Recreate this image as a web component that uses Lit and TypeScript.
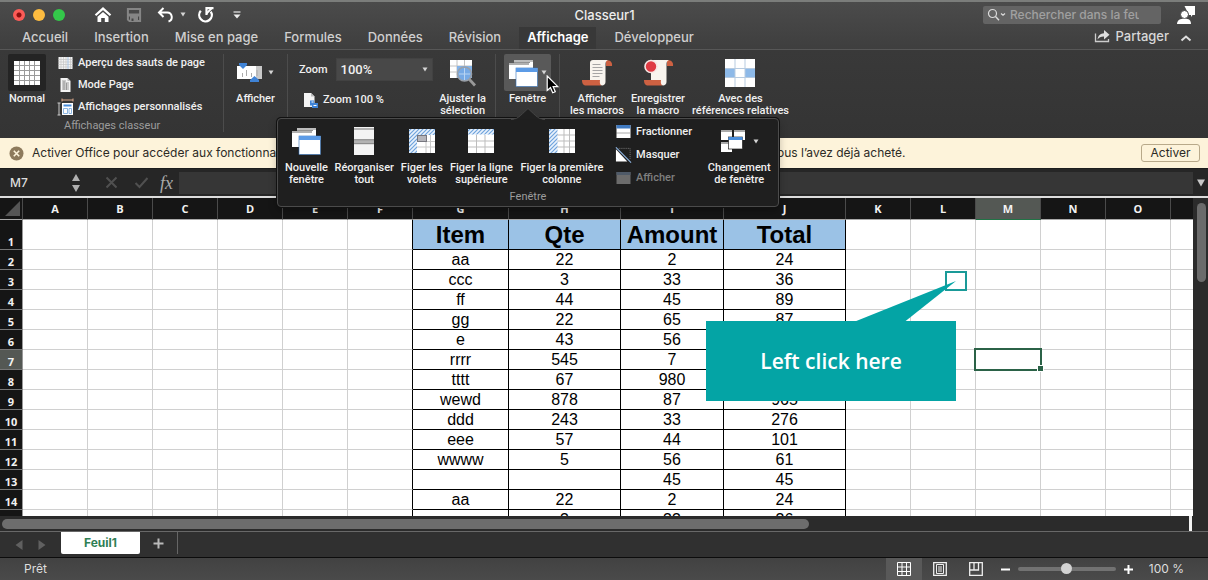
import { LitElement, html, css, svg } from "lit";
import { customElement, state } from "lit/decorators.js";
import { classMap } from "lit/directives/class-map.js";

const TABS = ["Accueil", "Insertion", "Mise en page", "Formules", "Données", "Révision", "Affichage", "Développeur"];
const COLUMNS = "ABCDEFGHIJKLMNOP".split("");
const DATA: string[][] = [
  ["Item", "Qte", "Amount", "Total"],
  ["aa", "22", "2", "24"],
  ["ccc", "3", "33", "36"],
  ["ff", "44", "45", "89"],
  ["gg", "22", "65", "87"],
  ["e", "43", "56", "99"],
  ["rrrr", "545", "7", "552"],
  ["tttt", "67", "980", "1047"],
  ["wewd", "878", "87", "965"],
  ["ddd", "243", "33", "276"],
  ["eee", "57", "44", "101"],
  ["wwww", "5", "56", "61"],
  ["", "", "45", "45"],
  ["aa", "22", "2", "24"],
  ["ccc", "3", "33", "36"],
];

const hatch = (id: string) => svg`<defs><pattern id=${id} width="4" height="4" patternUnits="userSpaceOnUse">
  <rect width="4" height="4" fill="#e9f2fc"/><path d="M-1 1L1-1M0 4L4 0M3 5L5 3" stroke="#6fa3dc" stroke-width="1.2"/></pattern></defs>`;

const icons = {
  home: html`<svg width="18" height="16" viewBox="0 0 18 16"><path d="M1.500 8.300L9 1.600l7.500 6.700" fill="none" stroke="#fff" stroke-width="2.200"/><path d="M9 5l5.500 4.800V15H10.800v-4H7.200v4H3.500V9.800z" fill="#fff"/></svg>`,
  save: html`<svg width="16" height="16" viewBox="0 0 16 16"><path d="M1.900 1.900h12.200v12.200H3.500L1.900 12.500z" fill="none" stroke="#858585" stroke-width="2"/><path d="M2 6.500h12v3H2zM4 9.500h8V15H4z" fill="#858585"/><path d="M5.500 11.500h2v2.500h-2z" fill="#454545"/></svg>`,
  undo: html`<svg width="17" height="16" viewBox="0 0 17 16"><path d="M6.500 1L2 5.500 6.500 10M2.500 5.500H10a4.600 4.600 0 0 1 1.500 9" fill="none" stroke="#fff" stroke-width="2"/></svg>`,
  redo: html`<svg width="18" height="17" viewBox="0 0 18 17"><path d="M3.800 4.800A6.300 6.300 0 1 0 13.800 5.600" fill="none" stroke="#fff" stroke-width="2.300"/><path d="M9.500 9V2.200H16.500" fill="none" stroke="#fff" stroke-width="2.200"/><path d="M9.500 7.500L14.500 2.500" stroke="#fff" stroke-width="1.800"/></svg>`,
  more: html`<svg width="8" height="10" viewBox="0 0 8 10"><path d="M0.500 2h7" stroke="#ddd" stroke-width="1.300"/><path d="M0.500 4.500h7L4 8.500z" fill="#eee"/></svg>`,
  caret: html`<svg width="6" height="5" viewBox="0 0 6 5"><path d="M0.500 0.500h5L3 4.500z" fill="#d4d4d4"/></svg>`,
  search: html`<svg width="20" height="14" viewBox="0 0 20 14"><circle cx="5.500" cy="5.500" r="4" fill="none" stroke="#dcdcdc" stroke-width="1.200"/><path d="M8.500 8.500l3.500 3.700" stroke="#dcdcdc" stroke-width="1.400"/><path d="M14 5.500l2 1.700 2-1.700" fill="none" stroke="#dcdcdc" stroke-width="1.200"/></svg>`,
  person: html`<svg width="20" height="20" viewBox="0 0 20 20"><path d="M8.500 1H19v9h-2.500l-1.500 2v-2h-2z" fill="#fff"/><circle cx="8.500" cy="9.500" r="4" fill="#fff" stroke="#454545"/><path d="M1 19c.3-4 3-5.200 7.500-5.200S14.800 15 15 19z" fill="#fff"/></svg>`,
  share: html`<svg width="17" height="14" viewBox="0 0 17 14"><path d="M1.500 4.500v8h13v-2.500" fill="none" stroke="#ccc" stroke-width="1.300"/><path d="M3.500 10.500C4 6.500 6.500 4.300 10 4.200V1l5.500 4.800-5.500 4.700V7.400C7 7.300 5 8.500 3.500 10.500z" fill="#ddd"/></svg>`,
  collapse: html`<svg width="12" height="7" viewBox="0 0 12 7"><path d="M1.500 5.500L6 1.500l4.500 4" fill="none" stroke="#ddd" stroke-width="2"/></svg>`,
  normal: html`<svg width="28" height="26" viewBox="0 0 28 26"><rect x="1" y="1" width="26" height="24" fill="#fff"/><path d="M6.500 1v24M11.500 1v24M16.500 1v24M21.500 1v24M1 5.500h26M1 10.500h26M1 15.500h26M1 20.500h26" stroke="#9a9a9a" stroke-width="1"/></svg>`,
  breaks: html`<svg width="16" height="14" viewBox="0 0 16 14"><rect x="1" y="1" width="14" height="12" fill="#f3f3f3"/><path d="M3.500 1v12M6 1v12M8.500 1v12M13 1v12M1 3.500h14M1 6h14M1 8.500h14M1 11h14" stroke="#c4c4c4" stroke-width=".7"/><path d="M10.500 1v12" fill="none" stroke="#a8c4e4"/></svg>`,
  page: html`<svg width="16" height="16" viewBox="0 0 16 16"><path d="M3 1h7l3 3v11H3z" fill="#f4f4f4"/><path d="M4.500 4h4M4.500 6h7M4.500 8h7M4.500 10h7M4.500 12h7M6.500 4v9M9 6v7" stroke="#8d8d8d" stroke-width=".8"/><path d="M10 1v3h3" fill="#bbb"/></svg>`,
  custom: html`<svg width="17" height="18" viewBox="0 0 17 18"><path d="M5 2h11M5 .5v3M16 .5v3" stroke="#d9a88a"/><path d="M2 5v12M.5 5h3M.5 17h3" stroke="#ccc"/><rect x="5" y="5" width="11" height="12" fill="#fff"/><rect x="6.500" y="6.500" width="8" height="2" fill="#4a8edb"/><path d="M6.500 10.500h4v5h-4zM12 10.500h2.500v5H12z" fill="none" stroke="#6fa3dc" stroke-width=".8"/></svg>`,
  show: html`<svg width="26" height="22" viewBox="0 0 26 22"><rect x="0" y="4" width="25" height="13" fill="#fff"/><rect x="19" y="4" width="6" height="13" fill="#c9c9c9"/><path d="M5.500 11v4M9.500 8v6M14.500 11v4M20 8v6" stroke="#aaa"/><path d="M2 1h8v2L6 7 2 3z" fill="#3f83d6"/><path d="M13 20h9v-2l-4.500-4L13 18z" fill="#3f83d6"/></svg>`,
  zoom100: html`<svg width="17" height="17" viewBox="0 0 17 17"><path d="M2 1h7l3.500 3.500V15H2z" fill="#f4f4f4"/><path d="M9 1v3.500h3.500" fill="#bbb"/><path d="M8 8.500h4v2.500h4v5h-6v-2.500H8z" fill="#3f83d6"/><path d="M9.500 10h2M11.500 13.500h3" stroke="#fff"/></svg>`,
  fit: html`<svg width="27" height="28" viewBox="0 0 27 28"><rect x="1" y="1" width="22" height="18" fill="#fff"/><path d="M8 1v18M15.500 1v18M1 7h22M1 13h22" stroke="#c2c2c2"/><rect x="8" y="7" width="15" height="12" fill="#82b2e8"/><path d="M20 20l6 6.500" stroke="#999" stroke-width="2.800"/><circle cx="15.500" cy="15" r="7" fill="#77aae5" stroke="#9aa0a8" stroke-width="1.600"/><path d="M15.500 9v12M10 15h11" stroke="#b9d4f2"/></svg>`,
  window: html`<svg width="30" height="28" viewBox="0 0 30 28"><rect x="6" y="1" width="19" height="15" fill="#fff"/><rect x="6" y="1" width="19" height="2" fill="#bdbdbd"/><path d="M6 3.500h16" stroke="#777" stroke-width=".8"/><rect x="1" y="4" width="20" height="16" fill="#fff"/><path d="M1 5h20" stroke="#b0b0b0" stroke-width="2"/><rect x="8" y="9" width="21.500" height="18.500" fill="#fff" stroke="#2f6fb8" stroke-width=".6"/><rect x="8" y="9" width="21.500" height="4" fill="#5c9be6"/></svg>`,
  macros: html`<svg width="32" height="28" viewBox="0 0 32 28"><path d="M25 1c5 0 6.500 3 6 6h-6z" fill="#cd6142"/><path d="M9 4c0-2 1-3 3-3h15c-2 1-2.500 2-2.500 4v18c0 3-3 4-5 3L9 21z" fill="#f8f4ee"/><path d="M1 21h18c-.5 3 0 4.500 1.500 5.500H5C2 26.500 1 24 1 21z" fill="#cd6142"/><path d="M11.500 5.500h8M11.500 8.500h10M11.500 11.500h10M11.500 14.500h10M11.500 17.500h7" stroke="#9c9c9c" stroke-width=".9"/></svg>`,
  record: html`<svg width="32" height="28" viewBox="0 0 32 28"><path d="M25 1c5 0 6.500 3 6 6h-6z" fill="#cd6142"/><path d="M9 4c0-2 1-3 3-3h15c-2 1-2.500 2-2.500 4v18c0 3-3 4-5 3L9 21z" fill="#f8f4ee"/><path d="M2 21h17c-.5 3 0 4.500 1.500 5.500H6C3 26.500 2 24 2 21z" fill="#cd6142"/><circle cx="9" cy="7.500" r="6" fill="#df3b43" stroke="#f7e6e3" stroke-width="1.600"/></svg>`,
  relative: html`<svg width="32" height="28" viewBox="0 0 32 28"><rect x="1" y="0" width="30" height="28" fill="#fff"/><rect x="1" y="9" width="10" height="10" fill="#8db9e8"/><rect x="21" y="9" width="10" height="10" fill="#8db9e8"/><path d="M11 0v28M21 0v28M1 9.500h30M1 18.500h30" stroke="#b7cbe0"/></svg>`,
  arrange: html`<svg width="22" height="28" viewBox="0 0 22 28"><rect x="1" y="0" width="20" height="28" fill="#f4f4f4"/><rect x="1" y="1" width="20" height="2" fill="#b3b3b3"/><rect x="1" y="13" width="20" height="3.500" fill="#b3b3b3"/><path d="M1 12.700h20M1 16.700h20" stroke="#666" stroke-width=".8"/></svg>`,
  freeze: html`<svg width="28" height="26" viewBox="0 0 28 26">${hatch("hf")}<rect x="1" y="1" width="26" height="24" fill="#fff"/><path d="M18 7v18M1 13.500h26M1 19h26M22.500 7v18" stroke="#c8c8c8"/><rect x="1" y="1" width="26" height="6" fill="url(#hf)"/><rect x="1" y="1" width="8" height="24" fill="url(#hf)"/><rect x="9.500" y="7.500" width="9" height="6" fill="#b5b5bb" stroke="#77777f"/></svg>`,
  freezeRow: html`<svg width="28" height="26" viewBox="0 0 28 26">${hatch("hr")}<rect x="1" y="1" width="26" height="24" fill="#fff"/><path d="M9.500 7v18M18 7v18M1 13h26M1 19h26" stroke="#bdbdbd"/><rect x="1" y="1" width="26" height="5.500" fill="url(#hr)"/></svg>`,
  freezeCol: html`<svg width="28" height="26" viewBox="0 0 28 26">${hatch("hc")}<rect x="1" y="1" width="26" height="24" fill="#fff"/><path d="M16 1v24M21.500 1v24M9 7h18M9 13h18M9 19h18" stroke="#bdbdbd"/><rect x="1" y="1" width="8.500" height="24" fill="url(#hc)"/></svg>`,
  split: html`<svg width="16" height="15" viewBox="0 0 16 15"><rect x="1" y="1" width="14" height="13" fill="#fff"/><rect x="1" y="1" width="14" height="3.500" fill="#3f79c0"/><path d="M1 9h14" stroke="#555" stroke-dasharray="1 1"/></svg>`,
  hide: html`<svg width="18" height="18" viewBox="0 0 18 18"><path d="M4 2h12v12" fill="none" stroke="#777" stroke-dasharray="1 1"/><path d="M1 3v13h12z" fill="#fff"/><path d="M1 1l16 16" stroke="#8fb6e4" stroke-width="1.200"/></svg>`,
  unhide: html`<svg width="16" height="14" viewBox="0 0 16 14"><rect x="1" y="1" width="14" height="12" fill="#6c6c6c"/><rect x="1" y="1" width="14" height="3" fill="#4f5a68"/></svg>`,
  swap: html`<svg width="28" height="24" viewBox="0 0 28 24"><rect x="1" y="1" width="11" height="10" fill="#fff"/><rect x="1" y="1" width="11" height="2" fill="#aaa"/><rect x="14" y="1" width="11" height="10" fill="#fff"/><rect x="14" y="1" width="11" height="2" fill="#aaa"/><rect x="1" y="13" width="11" height="10" fill="#fff"/><rect x="1" y="13" width="11" height="2" fill="#aaa"/><rect x="8.500" y="8" width="14" height="12" fill="#fff" stroke="#222" stroke-width=".7"/><rect x="8.500" y="8" width="14" height="3" fill="#4a8edb"/></svg>`,
  pointer: html`<svg width="14" height="20" viewBox="0 0 14 20"><path d="M1.200 1v14.500l3.300-3 2.200 5.300 2.600-1.100-2.200-5.100h4.700z" fill="#000" stroke="#fff" stroke-width="1.200"/></svg>`,
};

@customElement("app-root")
export class AppRoot extends LitElement {
  @state() private activeTab = "Affichage";

  static styles = css`
    :host {
      display: flex;
      flex-direction: column;
      height: 100vh;
      overflow: hidden;
      background: #2b2b2b;
      color: #f0f0f0;
      font: 500 11px/12px Inter, "Liberation Sans", sans-serif;
    }
    * { box-sizing: border-box; }
    button, input, select { font: inherit; color: inherit; background: none; border: 0; padding: 0; margin: 0; outline: 0; }
    button { cursor: pointer; }
    svg { display: block; flex: none; }

    .top { background: linear-gradient(#4b4b4b, #3e3e3e); border-top: 2px solid #7b7d7b; }
    .titlebar { display: grid; grid-template-columns: 1fr auto 1fr; align-items: center; height: 25px; padding: 0 12px 0 13px; }
    .quick { display: flex; align-items: center; }
    .dots { display: flex; gap: 8px; margin-right: 29px; }
    .dot { width: 12px; height: 12px; border-radius: 50%; }
    .red { background: radial-gradient(circle, #8c0d0d 0 2px, #fc5b57 3px); }
    .yellow { background: #fdbc40; }
    .green { background: #34c84a; }
    .save { margin: 0 15px 0 14px; }
    .undo { margin-right: 6px; }
    .redo { margin: 0 18px 0 11px; }
    .title { font-size: 13px; line-height: 16px; font-weight: 500; color: #ededed; margin: 0; }
    .title-right { display: flex; justify-content: flex-end; align-items: center; gap: 15px; }
    .search { display: flex; align-items: center; gap: 3px; height: 18px; width: 178px; padding: 0 22px 0 4px; background: #646464; border-radius: 2px; }
    .search input { flex: 1; min-width: 0; font-size: 12px; line-height: 16px; }
    .search input::placeholder { color: #a0a0a0; opacity: 1; }

    .tabs { display: flex; align-items: center; height: 23px; padding: 0 16px 0 14px; border-bottom: 1px solid #575757; }
    .tab { height: 22px; padding: 0 8px 3px; margin-right: 10px; font-size: 13px; line-height: 16px; color: #cfcfcf; }
    .tab.active { background: #383838; color: #fff; font-weight: 600; }
    .share { display: flex; align-items: center; gap: 4px; margin-left: auto; padding-bottom: 4px; font-size: 13px; line-height: 18px; color: #d8d8d8; }
    .collapse { margin-left: 11px; }

    .ribbon { display: flex; height: 88px; flex: none; background: linear-gradient(#393939, #343434); padding-top: 4px; font-family: Roboto, "Liberation Sans", sans-serif; }
    .group { position: relative; display: flex; border-right: 1px solid #4c4c4c; margin-bottom: 6px; }
    .group:last-child { border: 0; }
    .big { display: flex; flex-direction: column; align-items: center; gap: 2px; text-align: center; white-space: nowrap; }
    .art { display: flex; align-items: center; justify-content: center; gap: 5px; height: 37px; padding: 0 4px; border-radius: 2px; }
    .art.dark { background: #242424; width: 38px; }
    .art.lit { background: #595959; gap: 3px; }
    .g-views { width: 224px; padding-left: 8px; gap: 11px; }
    .views { display: flex; flex-direction: column; gap: 3px; }
    .line { display: flex; align-items: center; gap: 4px; height: 20px; white-space: nowrap; }
    .line svg { width: 17px; }
    .views .line:first-child { height: 18px; }
    .caption { color: #9c9c9c; font-weight: 400; }
    .views .caption { padding-left: 7px; }
    .g-show { width: 64px; justify-content: center; }
    .g-zoom { width: 208px; padding: 0 9px 0 11px; justify-content: space-between; }
    .zoomcol { display: flex; flex-direction: column; gap: 9px; }
    .zoomrow { display: flex; align-items: center; gap: 8px; padding-top: 4px; }
    .combo { display: flex; align-items: center; width: 97px; height: 23px; padding-right: 4px; background: #484848; border: 1px solid #424242; }
    .combo select { flex: 1; appearance: none; padding-left: 4px; font-size: 13px; line-height: 16px; }
    .zoomcol .line { padding-left: 3px; }
    .g-window { width: 64px; justify-content: center; }
    .g-macros { padding-left: 10px; gap: 7px; }

    .pointer { position: absolute; left: 50px; top: 21px; z-index: 4; }
    .flyout { position: absolute; left: -219px; top: 64px; width: 502px; height: 89px; z-index: 3; padding: 5px 7px 0; background: #1f1f1f; border: 1px solid #4b4b4b; border-radius: 4px; box-shadow: 0 0 0 1px #111, 0 4px 8px #0004; }
    .tail { position: absolute; left: 233px; top: -11px; }
    .choices { display: flex; gap: 6px; height: 67px; }
    .choices .art { height: 34px; }
    .choices .big { gap: 4px; }
    .w1 { width: 43px; } .w2 { width: 61px; } .w3 { width: 43px; } .w4 { width: 65px; } .w5 { width: 85px; } .w6 { width: 64px; }
    .choices .big.w6 { margin-left: 3px; }
    .stack { width: 84px; margin-left: 5px; margin-top: -4px; }
    .stack .line { height: 23px; }
    .off { color: #7f7f7f; }
    .flyout .caption { text-align: center; }

    .banner { display: flex; align-items: center; gap: 8px; height: 31px; flex: none; padding: 0 8px 0 9px; background: #fdf3da; color: #2c2a25; border-bottom: 1px solid #1d1d1d; font-size: 12px; line-height: 16px; font-weight: 400; }
    .banner p { display: flex; flex: 1; margin: 0; white-space: nowrap; }
    .banner .lead { width: 745px; overflow: hidden; }
    .activate { width: 59px; height: 18px; border: 1px solid #b8a98a; border-radius: 3px; }

    .formula { display: flex; align-items: center; height: 27px; flex: none; background: #262626; padding-left: 10px; }
    .cellname { width: 60px; font-size: 12px; line-height: 16px; color: #dcdcdc; }
    .fx { font: italic 18px/20px "Liberation Serif", serif; color: #aaa; margin: 0 6px 0 11px; }
    .step { margin-right: 23px; }
    .cancel { margin-right: 16px; }
    .fbox { flex: 1; height: 22px; background: #363636; }
    .drop { margin: 0 3px 0 4px; }

    .sheet { position: relative; display: flex; flex: 1; min-height: 0; border-top: 2px solid #dcdcdc; }
    .cells { position: relative; flex: 1; min-width: 0; overflow: hidden; background: #fff; }
    table { table-layout: fixed; width: 1233px; border-collapse: separate; border-spacing: 0; color: #000; font: 400 16px/18px "Liberation Sans", Arial, sans-serif; }
    col.c { width: 65px; } col.rowhead { width: 23px; } col.G { width: 96px; } col.H { width: 112px; } col.I { width: 103px; } col.J { width: 122px; }
    th, td { padding: 0; height: 20px; border-right: 1px solid #d0d0d0; border-bottom: 1px solid #d0d0d0; text-align: center; overflow: hidden; white-space: nowrap; }
    td { padding-top: 1px; }
    thead th { height: 22px; background: #151515; color: #f2f2f2; border-right-color: #4a4a4a; border-bottom-color: #aaa; font: 700 11px/18px "Open Sans", sans-serif; }
    tbody th { background: #151515; color: #f2f2f2; border-bottom-color: #777; border-right-color: #999; font: 700 11px/14px "Open Sans", sans-serif; vertical-align: bottom; }
    thead th.sel { background: #545854; border-bottom: 1px solid #217346; }
    tbody th.sel { background: #545854; }
    .corner svg { margin-left: 4px; }
    tr.first > * { height: 30px; }
    td.k { border-color: #000; }
    td.edge { border-right-color: #000; }
    tr.first td.k { background: #9bc2e6; font-size: 24px; line-height: 28px; font-weight: 700; }
    .vbar { width: 15px; flex: none; background: #2b2b2b; padding: 5px 2px 0 4px; }
    .vthumb { width: 9px; height: 79px; border-radius: 5px; background: #6b6b6b; }
    .selection { position: absolute; left: 974px; top: 150px; width: 68px; height: 23px; border: 2px solid #2b6247; z-index: 1; }
    .handle { position: absolute; right: -4px; bottom: -3px; width: 5px; height: 5px; background: #2b6247; border: 1px solid #fff; box-sizing: content-box; }
    .target { position: absolute; left: 945px; top: 73px; width: 22px; height: 20px; border: 2px solid #1a9a98; }
    .beak { position: absolute; left: 855px; top: 83px; }
    .callout { position: absolute; left: 706px; top: 123px; width: 250px; height: 80px; display: grid; place-items: center; background: #04a4a5; color: #fff; font: 600 21px/28px "Open Sans", sans-serif; z-index: 2; }

    .hbar { display: flex; height: 15px; flex: none; margin-right: 19px; padding: 3px 0 0 2px; background: #2b2b2b; box-shadow: 3px 0 #f2f2f2; }
    .hthumb { width: 68%; height: 10px; border-radius: 5px; background: #6d6d6d; }
    .sheets { display: flex; align-items: flex-start; height: 27px; flex: none; background: #303030; border-top: 1px solid #686868; border-bottom: 1px solid #0c0c0c; }
    .nav { display: flex; gap: 15px; padding: 8px 15px 0 15px; }
    .sheet-tab { width: 79px; height: 22px; background: #fff; color: #2f8055; font-size: 12px; line-height: 22px; font-weight: 700; border-radius: 0 0 2px 2px; }
    .add { display: grid; place-items: center; width: 38px; height: 22px; border-right: 1px solid #666; }
    .status { display: flex; align-items: center; height: 22px; flex: none; padding: 0 24px; background: linear-gradient(#424242, #4a4a4a); color: #dedede; font-size: 12px; font-weight: 400; line-height: 16px; }
    .ready { margin-right: auto; }
    .mode { display: grid; place-items: center; width: 36px; height: 22px; }
    .mode.on { background: #595959; }
    .zoomer { display: flex; align-items: center; gap: 8px; margin: 0 16px 0 7px; }
    input[type="range"] { appearance: none; width: 98px; height: 14px; }
    input[type="range"]::-webkit-slider-runnable-track { height: 4px; background: #727272; border-radius: 2px; }
    input[type="range"]::-webkit-slider-thumb { appearance: none; width: 11px; height: 11px; margin-top: -4px; border-radius: 50%; background: #d2d2d2; }
  `;

  private big(icon: unknown, a: string, b = "", cls = "", caret = false) {
    return html`<button class="big ${cls}">
      <span class="art">${icon}${caret ? icons.caret : ""}</span>
      <span>${a}${b ? html`<br />${b}` : ""}</span>
    </button>`;
  }

  private line(icon: unknown, label: string, disabled = false) {
    return html`<button class="line ${disabled ? "off" : ""}" ?disabled=${disabled}>${icon}<span>${label}</span></button>`;
  }

  private flyout() {
    return html`<div class="flyout">
      <svg class="tail" width="34" height="12" viewBox="0 0 34 12"><path d="M0 11.500C6 11.500 8 9 17 .5 26 9 28 11.500 34 11.500" fill="#1f1f1f" stroke="#444"/><path d="M3 12h28" stroke="#1f1f1f"/></svg>
      <div class="choices">
        ${this.big(icons.window, "Nouvelle", "fenêtre", "w1")}
        ${this.big(icons.arrange, "Réorganiser", "tout", "w2")}
        ${this.big(icons.freeze, "Figer les", "volets", "w3")}
        ${this.big(icons.freezeRow, "Figer la ligne", "supérieure", "w4")}
        ${this.big(icons.freezeCol, "Figer la première", "colonne", "w5")}
        <div class="stack">
          ${this.line(icons.split, "Fractionner")}
          ${this.line(icons.hide, "Masquer")}
          ${this.line(icons.unhide, "Afficher", true)}
        </div>
        ${this.big(icons.swap, "Changement", "de fenêtre", "w6", true)}
      </div>
      <div class="caption">Fenêtre</div>
    </div>`;
  }

  private row(values: string[], r: number) {
    return html`<tr class=${classMap({ first: r === 0 })}>
      <th scope="row" class=${classMap({ sel: r === 6 })}>${r + 1}</th>
      ${COLUMNS.map((c, i) => html`<td class=${classMap({ k: i > 5 && i < 10, edge: i === 5 })}>${i > 5 && i < 10 ? values[i - 6] : ""}</td>`)}
    </tr>`;
  }

  render() {
    return html`
      <header class="top">
        <div class="titlebar">
          <div class="quick">
            <div class="dots"><span class="dot red"></span><span class="dot yellow"></span><span class="dot green"></span></div>
            <button aria-label="Accueil">${icons.home}</button>
            <button class="save" aria-label="Enregistrer">${icons.save}</button>
            <button class="undo" aria-label="Annuler">${icons.undo}</button>${icons.caret}
            <button class="redo" aria-label="Rétablir">${icons.redo}</button>
            <button aria-label="Personnaliser">${icons.more}</button>
          </div>
          <h1 class="title">Classeur1</h1>
          <div class="title-right">
            <label class="search">${icons.search}<input aria-label="Rechercher" placeholder="Rechercher dans la feuille" /></label>
            <button aria-label="Compte">${icons.person}</button>
          </div>
        </div>
        <nav class="tabs">
          ${TABS.map((t) => html`<button class=${classMap({ tab: true, active: t === this.activeTab })} @click=${() => (this.activeTab = t)}>${t}</button>`)}
          <button class="share">${icons.share}Partager</button>
          <button class="collapse" aria-label="Réduire le ruban">${icons.collapse}</button>
        </nav>
      </header>

      <section class="ribbon">
        <div class="group g-views">
          <button class="big"><span class="art dark">${icons.normal}</span><span>Normal</span></button>
          <div class="views">
            ${this.line(icons.breaks, "Aperçu des sauts de page")}
            ${this.line(icons.page, "Mode Page")}
            ${this.line(icons.custom, "Affichages personnalisés")}
            <div class="caption">Affichages classeur</div>
          </div>
        </div>
        <div class="group g-show">${this.big(icons.show, "Afficher", "", "", true)}</div>
        <div class="group g-zoom">
          <div class="zoomcol">
            <div class="zoomrow">
              <label for="zoom">Zoom</label>
              <div class="combo"><select id="zoom"><option>100%</option></select>${icons.caret}</div>
            </div>
            ${this.line(icons.zoom100, "Zoom 100 %")}
          </div>
          ${this.big(icons.fit, "Ajuster la", "sélection")}
        </div>
        <div class="group g-window">
          <button class="big"><span class="art lit">${icons.window}${icons.caret}</span><span>Fenêtre</span></button>
          <span class="pointer">${icons.pointer}</span>
          ${this.flyout()}
        </div>
        <div class="group g-macros">
          ${this.big(icons.macros, "Afficher", "les macros")}
          ${this.big(icons.record, "Enregistrer", "la macro")}
          ${this.big(icons.relative, "Avec des", "références relatives")}
        </div>
      </section>

      <section class="banner">
        <svg width="15" height="15" viewBox="0 0 15 15"><circle cx="7.500" cy="7.500" r="7" fill="#8d7a5c"/><path d="M4.800 4.800l5.400 5.400M10.200 4.800l-5.400 5.400" stroke="#fdf3da" stroke-width="1.600"/></svg>
        <p><span class="lead">Activer Office pour accéder aux fonctionnalités</span><span>ous l’avez déjà acheté.</span></p>
        <button class="activate">Activer</button>
      </section>

      <section class="formula">
        <input class="cellname" aria-label="Zone Nom" value="M7" />
        <svg class="step" width="12" height="20" viewBox="0 0 12 20"><path d="M2 8h8L6 1zM2 12h8l-4 7z" fill="#b0b0b0"/></svg>
        <svg class="cancel" width="13" height="13" viewBox="0 0 13 13"><path d="M1.500 1.500l10 10M11.500 1.500l-10 10" stroke="#505050" stroke-width="2"/></svg>
        <svg width="15" height="13" viewBox="0 0 15 13"><path d="M1.500 7l4 4L13.500 2" fill="none" stroke="#505050" stroke-width="2"/></svg>
        <span class="fx">fx</span>
        <input class="fbox" aria-label="Barre de formule" />
        <svg class="drop" width="8" height="8" viewBox="0 0 8 8"><path d="M0 .5h8L4 7.500z" fill="#c8c8c8"/></svg>
      </section>

      <main class="sheet">
        <div class="cells">
          <table>
            <colgroup><col class="rowhead" />${COLUMNS.map((c) => html`<col class="c ${c}" />`)}</colgroup>
            <thead><tr>
              <th class="corner" aria-label="Tout sélectionner"><svg width="17" height="17" viewBox="0 0 17 17"><path d="M16 1v15H1z" fill="#555"/></svg></th>
              ${COLUMNS.map((c) => html`<th scope="col" class=${classMap({ sel: c === "M" })}>${c}</th>`)}
            </tr></thead>
            <tbody>${DATA.map((v, r) => this.row(v, r))}</tbody>
          </table>
          <div class="selection"><span class="handle"></span></div>
          <div class="target"></div>
          <svg class="beak" width="101" height="41" viewBox="0 0 101 41"><path d="M0 40.500L101 0 50 40.500z" fill="#04a4a5"/></svg>
          <div class="callout">Left click here</div>
        </div>
        <div class="vbar"><div class="vthumb"></div></div>
      </main>
      <div class="hbar"><div class="hthumb"></div></div>

      <nav class="sheets">
        <div class="nav">
          <svg width="8" height="10" viewBox="0 0 8 10"><path d="M7.500 0v10L.5 5z" fill="#606060"/></svg>
          <svg width="8" height="10" viewBox="0 0 8 10"><path d="M.5 0v10l7-5z" fill="#606060"/></svg>
        </div>
        <button class="sheet-tab">Feuil1</button>
        <button class="add" aria-label="Ajouter une feuille"><svg width="11" height="11" viewBox="0 0 11 11"><path d="M5.500 .5v10M.5 5.500h10" stroke="#b9b9b9" stroke-width="2"/></svg></button>
      </nav>

      <footer class="status">
        <span class="ready">Prêt</span>
        <button class="mode on" aria-label="Normal"><svg width="14" height="14" viewBox="0 0 14 14"><path d="M.5 .5h13v13H.5zM5 .5v13M9.500 .5v13M.5 5h13M.5 9.500h13" fill="none" stroke="#fff"/></svg></button>
        <button class="mode" aria-label="Mise en page"><svg width="14" height="14" viewBox="0 0 14 14"><path d="M.7 .7h12.600v12.600H.7z" fill="none" stroke="#eee" stroke-width="1.300"/><path d="M3.500 2.500h7v9h-7z M5 5h4M5 7h4M5 9h4" fill="none" stroke="#eee"/></svg></button>
        <button class="mode" aria-label="Sauts de page"><svg width="14" height="14" viewBox="0 0 14 14"><path d="M.7 .7h12.600v12.600H.7zM5 .7v7M9.500 .7v7.300H.7" fill="none" stroke="#eee" stroke-width="1.300"/></svg></button>
        <div class="zoomer">
          <svg width="9" height="3" viewBox="0 0 9 3"><path d="M0 1.500h9" stroke="#fff" stroke-width="2"/></svg>
          <input type="range" aria-label="Niveau de zoom" min="0" max="100" value="50" />
          <svg width="9" height="9" viewBox="0 0 9 9"><path d="M0 4.500h9M4.500 0v9" stroke="#fff" stroke-width="2"/></svg>
        </div>
        <span>100 %</span>
      </footer>
    `;
  }
}
